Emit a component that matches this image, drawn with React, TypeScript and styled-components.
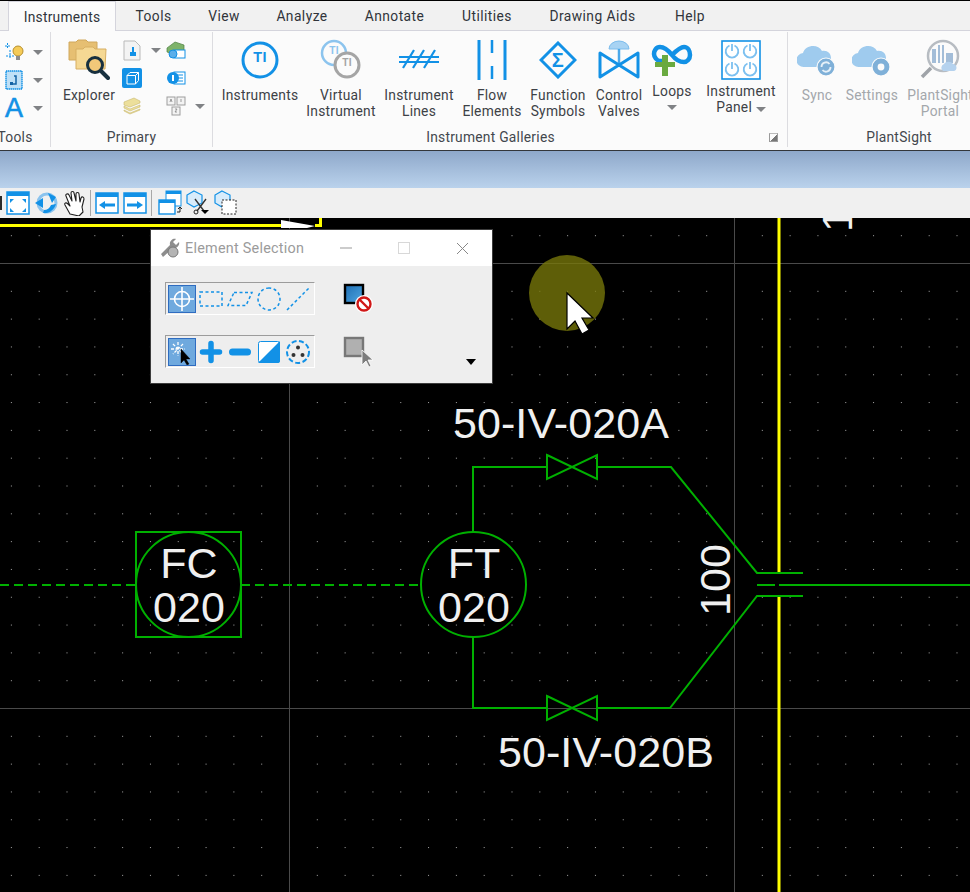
import { ReactNode } from "react";
import styled, { createGlobalStyle } from "styled-components";

const BLUE = "#1291e6";
const GREEN = "#00b000";
const UI_FONT = 'Roboto, "Noto Sans", sans-serif';

const GlobalStyle = createGlobalStyle`
  html, body {
    margin: 0;
    padding: 0;
    background: #000;
  }
  * {
    box-sizing: border-box;
  }
`;

const Page = styled.div`
  width: 970px;
  height: 892px;
  overflow: hidden;
  display: flex;
  flex-direction: column;
  font-family: ${UI_FONT};
  font-size: 13.8px;
  letter-spacing: 0.25px;
  color: #333;
  background: #000;
  padding-top: 1px;
`;

const TabBar = styled.div`
  height: 30px;
  flex: none;
  display: flex;
  padding-left: 8px;
  background: #f1f1f1;
  border-bottom: 1px solid #d4d4dc;
`;

const Tab = styled.div<{ $width: number; $active?: boolean }>`
  width: ${(p) => p.$width}px;
  height: ${(p) => (p.$active ? "30px" : "29px")};
  margin-right: ${(p) => (p.$active ? "2px" : "0")};
  line-height: 30px;
  text-align: center;
  white-space: nowrap;
  letter-spacing: ${(p) => (p.$active ? "0.25px" : "0.45px")};
  color: #30343a;
  background: ${(p) => (p.$active ? "#fbfbfb" : "transparent")};
  border: ${(p) => (p.$active ? "1px solid #d4d4dc" : "none")};
  border-bottom: none;
  position: relative;
  z-index: 1;
`;

const Ribbon = styled.div`
  height: 120px;
  flex: none;
  display: flex;
  background: #fbfbfb;
  border-bottom: 1px solid #33363a;
`;

const Group = styled.div<{ $width: number; $offset?: number }>`
  width: ${(p) => p.$width}px;
  margin-left: ${(p) => p.$offset ?? 0}px;
  flex: none;
  display: flex;
  flex-direction: column;
  position: relative;
  border-right: 1px solid #dcdce0;
  margin-top: 1px;
  margin-bottom: 3px;
`;

const GroupBody = styled.div<{ $pad?: number }>`
  height: 96px;
  display: flex;
  padding-left: ${(p) => p.$pad ?? 0}px;
`;

const GroupLabel = styled.div<{ $padRight?: number }>`
  text-align: center;
  line-height: 20px;
  padding-right: ${(p) => p.$padRight ?? 0}px;
  color: #43474d;
  white-space: nowrap;
`;

const Launcher = styled.div`
  position: absolute;
  right: 9px;
  bottom: 5px;
  width: 9px;
  height: 9px;
  border: 1px solid #9a9a9a;
  border-top-color: #bbb;
  background: linear-gradient(135deg, transparent 50%, #777 50%);
`;

const BigButton = styled.div<{ $width: number; $muted?: boolean }>`
  width: ${(p) => p.$width}px;
  flex: none;
  display: flex;
  flex-direction: column;
  align-items: center;
  padding-top: 7px;
  text-align: center;
  line-height: 16px;
  white-space: nowrap;
  color: ${(p) => (p.$muted ? "#a3a7ab" : "#3d4146")};
`;

const BigIcon = styled.div<{ $gap?: number }>`
  height: 42px;
  margin-bottom: ${(p) => p.$gap ?? 6}px;
  display: flex;
  align-items: center;
  justify-content: center;
`;

const Caret = styled.span<{ $color?: string }>`
  display: inline-block;
  width: 0;
  height: 0;
  border-left: 5px solid transparent;
  border-right: 5px solid transparent;
  border-top: 5px solid ${(p) => p.$color ?? "#808285"};
`;

const LoopsCaret = styled(Caret)`
  margin-top: 6px;
`;

const SmallColumn = styled.div<{ $width: number; $top?: number }>`
  width: ${(p) => p.$width}px;
  flex: none;
  display: flex;
  flex-direction: column;
  padding-top: ${(p) => p.$top ?? 8}px;
  gap: 8px;
`;

const SmallTool = styled.div`
  height: 20px;
  display: flex;
  align-items: center;
  gap: 9px;
`;

const LetterIcon = styled.span`
  width: 20px;
  font-family: "Liberation Sans", sans-serif;
  font-size: 27px;
  line-height: 20px;
  letter-spacing: 0;
  text-align: center;
  color: ${BLUE};
  -webkit-text-stroke: 0.6px ${BLUE};
`;

const Backdrop = styled.div`
  height: 37px;
  flex: none;
  background: linear-gradient(#8ea8ca, #bad2ec);
`;

const Toolbar = styled.div`
  height: 30px;
  flex: none;
  display: flex;
  align-items: center;
  gap: 4px;
  background: #f0f0f0;
`;

const ClippedTool = styled.div`
  width: 2px;
  height: 14px;
  background: #2b2b2b;
`;

const ToolSeparator = styled.div<{ $after?: number }>`
  width: 1px;
  height: 26px;
  margin-right: ${(p) => p.$after ?? 0}px;
  background: #a8a8a8;
`;

const Canvas = styled.div`
  flex: 1;
  position: relative;
  background: #000;
  overflow: hidden;
`;

const Drawing = styled.svg`
  display: block;
`;

const CadText = styled.text`
  font-family: "Liberation Sans", Arial, sans-serif;
  font-size: 43px;
  letter-spacing: 0.1px;
  fill: #f0f0f0;
`;

const SelectionWindow = styled.div`
  position: absolute;
  left: 150px;
  top: 11px;
  width: 343px;
  height: 155px;
  border: 1px solid #3c3c3c;
  background: #eeeeee;
  display: flex;
  flex-direction: column;
`;

const TitleBar = styled.div`
  height: 36px;
  flex: none;
  display: flex;
  align-items: center;
  padding-left: 8px;
  background: #fff;
  color: #9b9b9b;
  font-size: 14.4px;
`;

const TitleText = styled.div`
  margin-left: 4px;
  flex: 1;
`;

const WindowControl = styled.div`
  width: 58.5px;
  height: 100%;
  display: flex;
  align-items: center;
  justify-content: center;
`;

const WindowBody = styled.div`
  flex: 1;
  display: flex;
  flex-direction: column;
  gap: 20px;
  padding: 16px 0 0 14px;
  position: relative;
`;

const OptionRow = styled.div`
  display: flex;
  align-items: center;
  gap: 28px;
`;

const OptionStrip = styled.div`
  width: 150px;
  height: 33px;
  display: flex;
  align-items: center;
  padding-left: 2px;
  border: 1px solid #fff;
  border-top-color: #9c9c9c;
  border-left-color: #9c9c9c;
`;

const OptionButton = styled.div<{ $active?: boolean }>`
  width: 28px;
  height: 28px;
  flex: none;
  margin-right: 1px;
  display: flex;
  align-items: center;
  justify-content: center;
  background: ${(p) => (p.$active ? "#6fa9de" : "transparent")};
  border: ${(p) => (p.$active ? "1px solid #2f6cc0" : "none")};
`;

const MoreCaret = styled.span`
  position: absolute;
  right: 16px;
  bottom: 18px;
  border-left: 5px solid transparent;
  border-right: 5px solid transparent;
  border-top: 6px solid #000;
`;

const TiBadge = ({ x, y, r, color, stroke }: { x: number; y: number; r: number; color: string; stroke: number }) => (
  <g>
    <circle cx={x} cy={y} r={r} fill="#fbfbfb" stroke={color} strokeWidth={stroke} />
    <text x={x} y={y + r * 0.12} textAnchor="middle" fontFamily="Liberation Sans, sans-serif" fontWeight="700" fontSize={r * 0.85} fill={color}>
      TI
    </text>
  </g>
);

const Icon = ({ w, h, children }: { w: number; h: number; children: ReactNode }) => (
  <svg width={w} height={h} viewBox={`0 0 ${w} ${h}`}>
    {children}
  </svg>
);

const ExplorerIcon = () => (
  <Icon w={42} h={42}>
    <path d="M1 3h7l2-2h8l2 2h9v18H1z" fill="#e6bf72" stroke="#d0a85c" />
    <path d="M8 10h7l2-2h8l2 2h11l-1 20H8z" fill="#f5d893" stroke="#d7ae62" />
    <circle cx="27" cy="26" r="7.5" fill="#f2c879" stroke="#17303f" strokeWidth="3" />
    <path d="M33 32l7 7" stroke="#17303f" strokeWidth="4" strokeLinecap="round" />
  </Icon>
);

const LinesIcon = () => (
  <Icon w={42} h={42}>
    <path d="M1 23h40M1 18h40" stroke={BLUE} strokeWidth="2" />
    <path d="M5 29l11-18M15 29l11-18M26 29l11-18" stroke={BLUE} strokeWidth="2.2" />
  </Icon>
);

const FlowIcon = () => (
  <Icon w={30} h={42}>
    <path d="M2 1v40M28 1v40" stroke={BLUE} strokeWidth="3" />
    <path d="M15 1v13M15 27v13" stroke={BLUE} strokeWidth="2.5" />
  </Icon>
);

const SymbolIcon = () => (
  <Icon w={38} h={38}>
    <path d="M19 2l17 17-17 17L2 19z" fill="none" stroke={BLUE} strokeWidth="3" />
    <text x="19" y="26" textAnchor="middle" fontFamily="Liberation Sans, sans-serif" fontWeight="700" fontSize="20" fill={BLUE}>
      Σ
    </text>
  </Icon>
);

const ValveIcon = () => (
  <Icon w={42} h={42}>
    <path d="M11 10a10 8 0 0 1 20 0z" fill="#a8d3f3" stroke="#7cbcec" />
    <path d="M21 10v16" stroke="#4aa8ea" strokeWidth="2.5" />
    <path d="M2 14l38 24V14L2 38z" fill="none" stroke={BLUE} strokeWidth="3" strokeLinejoin="round" />
  </Icon>
);

const LoopIcon = () => (
  <Icon w={42} h={34}>
    <path d="M21 12C17 7 13 4 9 4 5 4 3 8 3 11s3 7 6 7h6M21 12c4-4 8-8 12-8s6 4 6 8-3 7-6 7c-5 0-9-3-12-7" fill="none" stroke={BLUE} strokeWidth="4.5" />
    <path d="M4 19h7v-7h6v7h7v5h-7v9h-6v-9H4z" fill="#6aaa40" />
  </Icon>
);

const PanelIcon = () => (
  <Icon w={40} h={40}>
    <rect x="1" y="1" width="38" height="38" fill="#fff" stroke={BLUE} strokeWidth="1.6" />
    {[
      [11, 11],
      [29, 11],
      [11, 29],
      [29, 29],
    ].map(([x, y]) => (
      <g key={`${x}-${y}`} fill="none" stroke="#7cc0f0" strokeWidth="1.8">
        <path d={`M${x - 2.5} ${y - 5.5}a6.3 6.3 0 1 0 5 0`} />
        <path d={`M${x} ${y - 7}v7`} />
      </g>
    ))}
  </Icon>
);

const CloudIcon = ({ gear }: { gear?: boolean }) => (
  <Icon w={40} h={34}>
    <path d="M7 24a7 7 0 0 1-1-14C8 2 21 0 25 8c5-1 9 2 9 7v9z" fill="#9fcbee" />
    <circle cx={29} cy={24} r={9} fill="#7fb0d8" stroke="#fbfbfb" strokeWidth="1.2" />
    {gear ? (
      <circle cx={29} cy={24} r={3.4} fill="#fbfbfb" />
    ) : (
      <path d="M24.5 24a4.5 4.5 0 0 1 8-3M33.5 24a4.5 4.5 0 0 1-8 3" fill="none" stroke="#e6f0f8" strokeWidth="1.8" />
    )}
  </Icon>
);

const PortalIcon = () => (
  <Icon w={42} h={42}>
    <circle cx="24" cy="17" r="15" fill="#fbfbfb" stroke="#b7bcc2" strokeWidth="2.5" />
    <path d="M12 29l-9 9" stroke="#9fa3a8" strokeWidth="3.5" />
    <path d="M13 24V10h4v14zM19 24V6h2v18zM23 24V6h2v18zM27 24V14h7v10z" fill="#a3bdd8" />
    <path d="M24 32a4 4 0 0 1 1-7c2-3 7-3 9 0 4 0 5 6 1 7z" fill="#b5d2ee" />
  </Icon>
);

const SmallDoc = () => (
  <Icon w={20} h={21}>
    <path d="M2 1h11l5 5v14H2z" fill="#f3f3f3" stroke="#b9b9b9" />
    <path d="M8 12h2V7h2v5h2v4H8z" fill={BLUE} />
  </Icon>
);

const SmallCube = () => (
  <Icon w={20} h={20}>
    <rect width="20" height="20" rx="2" fill={BLUE} />
    <path d="M5 7.5h8.5V16H5zM5 7.5L8 4.5h8.5L13.5 7.5M16.5 4.5v8l-3 3.5" fill="none" stroke="#fff" strokeWidth="1" />
  </Icon>
);

const SmallStack = () => (
  <Icon w={20} h={18}>
    <path d="M2 5l10-4 6 3v2L8 10 2 8zM2 9l6 3 10-4v2L8 14l-6-3zM2 13l6 3 10-4v1L8 17l-6-3z" fill="#ecdf9b" stroke="#c9b96e" strokeWidth="0.6" />
  </Icon>
);

const SmallBox = () => (
  <Icon w={20} h={20}>
    <path d="M1 8l8-6 9 3v5l-8 5-9-3z" fill="#7eb36a" stroke="#4f8042" strokeWidth="0.7" />
    <rect x="8" y="10" width="11" height="8" fill="#fff" stroke={BLUE} />
    <circle cx="7" cy="14" r="4" fill="#5aaeea" stroke={BLUE} />
  </Icon>
);

const SmallInfo = () => (
  <Icon w={20} h={16}>
    <rect x="8" y="2" width="11" height="12" fill="#fff" stroke={BLUE} />
    <path d="M11 5h6M11 8h6M11 11h6" stroke={BLUE} />
    <circle cx="7" cy="8" r="6" fill={BLUE} />
    <rect x="6" y="5" width="2" height="6" fill="#fff" />
  </Icon>
);

const SmallKeys = () => (
  <Icon w={20} h={20}>
    <g fill="#f3f3f3" stroke="#9d9d9d">
      <rect x="1" y="1" width="8" height="8" />
      <rect x="11" y="1" width="8" height="8" />
      <rect x="6" y="11" width="8" height="8" />
    </g>
    <path d="M4 6l1-3 1 3M15 3v3M9 13h2l-2 3h2" fill="none" stroke="#777" strokeWidth="0.7" />
  </Icon>
);

const SmallBulb = () => (
  <Icon w={20} h={20}>
    <path d="M1 4h5M3.5 1v6M2 14h8M6 8v9" stroke={BLUE} strokeWidth="1" strokeDasharray="2 1" />
    <circle cx="14" cy="9" r="5" fill="#f5cb58" stroke="#b68f2e" />
    <rect x="12" y="14" width="4" height="4" fill="#8d8d8d" />
  </Icon>
);

const SmallNote = () => (
  <Icon w={20} h={20}>
    <rect x="2" y="1" width="16" height="18" fill="#bfe0f6" stroke={BLUE} strokeWidth="1.4" strokeDasharray="1.5 0.5" />
    <path d="M7 14h5V6h-2" fill="none" stroke="#1463a5" strokeWidth="1.5" />
    <rect x="6" y="12" width="3" height="3" fill="#1463a5" />
  </Icon>
);

const BlueWindowIcon = ({ arrow }: { arrow?: "left" | "right" }) => (
  <Icon w={24} h={22}>
    <rect x="1" y="1" width="22" height="20" fill="#fff" stroke={BLUE} strokeWidth="1.5" />
    <rect x="1" y="1" width="22" height="4" fill={BLUE} />
    {arrow === "left" && <path d="M4 13l6-4v2.5h10v3H10V17z" fill={BLUE} />}
    {arrow === "right" && <path d="M20 13l-6-4v2.5H4v3h10V17z" fill={BLUE} />}
  </Icon>
);

const FitViewIcon = () => (
  <Icon w={24} h={24}>
    <rect x="1" y="1" width="22" height="22" fill="#fff" stroke={BLUE} strokeWidth="1.5" />
    <rect x="1" y="1" width="22" height="4" fill={BLUE} />
    <path d="M4 8l4 0-4 4zM20 8l-4 0 4 4zM4 21l4 0-4-4zM20 21l-4 0 4-4z" fill={BLUE} />
  </Icon>
);

const RotateIcon = () => (
  <Icon w={24} h={24}>
    <circle cx="13" cy="12" r="9" fill="none" stroke="#8ac3ee" strokeWidth="3" />
    <path d="M1 12l8-5v10z" fill={BLUE} />
    <path d="M14 2l8 4-4 6z" fill={BLUE} />
    <path d="M9 22c6 1 11-3 13-9l-5 1c-1 3-4 5-7 5z" fill={BLUE} />
  </Icon>
);

const HandIcon = () => (
  <Icon w={24} h={26}>
    <path
      d="M8 24L3 15c-1-2 1-3 3-1l2 2L4 6c-1-2 2-3 3-1l3 6-1-8c0-2 3-2 3 0l2 8 0-7c0-2 3-2 3 0l1 8 1-4c1-2 3-1 3 1l-2 8 1 5-4 4z"
      fill="#fff"
      stroke="#1f1f1f"
      strokeWidth="1.1"
      strokeLinejoin="round"
    />
  </Icon>
);

const CopyWindowIcon = () => (
  <Icon w={24} h={26}>
    <rect x="8" y="1" width="15" height="15" fill="#fff" stroke={BLUE} />
    <rect x="8" y="1" width="15" height="3" fill={BLUE} />
    <rect x="1" y="10" width="16" height="14" fill="#fff" stroke={BLUE} strokeWidth="1.4" />
    <rect x="1" y="10" width="16" height="3" fill={BLUE} />
    <path d="M19 22h3v-4M20 19l2-2 2 2" fill="none" stroke="#222" strokeWidth="1" />
  </Icon>
);

const CubeCutIcon = () => (
  <Icon w={24} h={26}>
    <path d="M8 1l8 4v8l-8 4-7-4V5z" fill="#d8ecfb" stroke={BLUE} strokeWidth="1.2" />
    <path d="M9 9l9 12M20 9l-9 12" stroke="#333" strokeWidth="1.4" />
    <circle cx="10" cy="22" r="2" fill="none" stroke="#222" />
    <path d="M15 20h8l-4 4z" fill="#000" />
  </Icon>
);

const CubeSelectIcon = () => (
  <Icon w={24} h={26}>
    <path d="M8 1l8 4v8l-8 4-7-4V5z" fill="#d8ecfb" stroke={BLUE} strokeWidth="1.2" />
    <rect x="8" y="10" width="14" height="14" fill="#fff" stroke="#222" strokeDasharray="2 1.5" />
  </Icon>
);

const WrenchIcon = () => (
  <Icon w={22} h={22}>
    <path d="M4 20L2 17l9-9c-1-4 3-7 6-6l-3 3 3 3 3-3c1 3-2 7-6 6z" fill="#8d8d8d" />
    <circle cx="14" cy="15" r="5" fill="#b4b4b4" stroke="#777" />
  </Icon>
);

const Crosshair = () => (
  <Icon w={26} h={26}>
    <circle cx="13" cy="13" r="7.5" fill="none" stroke="#fff" strokeWidth="1.6" />
    <path d="M13 1v24M1 13h24" stroke="#fff" strokeWidth="1.6" />
  </Icon>
);

const DashedShape = ({ d }: { d: string }) => (
  <Icon w={26} h={26}>
    <path d={d} fill="none" stroke={BLUE} strokeWidth="1.5" strokeDasharray="3 2.5" />
  </Icon>
);

const PickIcon = () => (
  <Icon w={26} h={26}>
    <path d="M9 3v14M2 10h14M4 5l10 10M14 5L4 15" stroke="#fff" strokeWidth="1.3" strokeDasharray="3 1.5" />
    <path d="M12 10v14l3-3 3 5 2-1-3-5h4z" fill="#000" stroke="#000" strokeWidth="0.4" />
  </Icon>
);

const PlusIcon = () => (
  <Icon w={26} h={26}>
    <path d="M13 4.5v17M4.5 13h17" stroke={BLUE} strokeWidth="5.5" strokeLinecap="round" />
  </Icon>
);

const MinusIcon = () => (
  <Icon w={26} h={26}>
    <path d="M5.5 13h15" stroke={BLUE} strokeWidth="7" strokeLinecap="round" />
  </Icon>
);

const InvertIcon = () => (
  <Icon w={26} h={26}>
    <rect x="2.5" y="2.5" width="21" height="21" rx="2" fill="#fff" stroke={BLUE} />
    <path d="M24 2v20a2 2 0 0 1-2 2H2z" fill={BLUE} />
  </Icon>
);

const DotsIcon = () => (
  <Icon w={26} h={26}>
    <circle cx="13" cy="13" r="11" fill="none" stroke={BLUE} strokeWidth="2" strokeDasharray="5 2.5" />
    <circle cx="13" cy="8.5" r="2" fill="#333" />
    <circle cx="8.5" cy="16" r="2" fill="#333" />
    <circle cx="17.5" cy="16" r="2" fill="#333" />
  </Icon>
);

const NoFillIcon = () => (
  <Icon w={32} h={32}>
    <defs>
      <linearGradient id="noFill" x1="0" y1="0" x2="1" y2="1">
        <stop offset="0" stopColor="#1f6fb5" />
        <stop offset="1" stopColor="#4fa6e0" />
      </linearGradient>
    </defs>
    <rect x="2" y="2" width="18" height="18" fill="url(#noFill)" stroke="#000" strokeWidth="2.4" />
    <circle cx="21" cy="21" r="9" fill="#fff" />
    <circle cx="21" cy="21" r="6.5" fill="#fff" stroke="#d01818" strokeWidth="2.4" />
    <path d="M16.5 16.5l9 9" stroke="#d01818" strokeWidth="2.4" />
  </Icon>
);

const GreySelectIcon = () => (
  <Icon w={32} h={32}>
    <rect x="2" y="2" width="18" height="18" fill="#b0b0b0" stroke="#777" strokeWidth="2.4" />
    <path d="M19 14v15l4-4 3 6 2-1-3-6h5z" fill="#7c7c7c" stroke="#fff" strokeWidth="0.8" />
  </Icon>
);

const PITCH = 27.8125;

function CadDrawing() {
  return (
    <Drawing width={970} height={674} viewBox="0 218 970 674">
      <defs>
        <pattern id="gridDots" x={289} y={263} width={PITCH} height={PITCH} patternUnits="userSpaceOnUse">
          <rect x={0} y={0} width={1} height={1} fill="#a8a8a8" />
        </pattern>
      </defs>
      <rect x={0} y={218} width={970} height={674} fill="#000" />
      <rect x={0} y={218} width={970} height={674} fill="url(#gridDots)" />
      <path d="M289.5 218v674M734.5 218v674M0 263.5h970M0 708.5h970" stroke="#4a4a4a" strokeWidth="1" />

      {/* yellow sheet border */}
      <path d="M779 218v355M779 597v295" stroke="#ffff00" strokeWidth="3" />
      <path d="M0 225.5h281M315 225.5h5.5V218" fill="none" stroke="#ffff00" strokeWidth="3" />
      <path d="M281 220l34 6-8 2h-26z" fill="#fff" />
      <CadText transform="translate(852 232) rotate(-90)">1</CadText>

      <g fill="none" stroke={GREEN} strokeWidth="2">
        <rect x={136} y={532} width={105} height={105} />
        <circle cx={188.5} cy={584.5} r={52.5} />
        <circle cx={473.5} cy={584.5} r={52.5} />
        <path d="M0 585h136M241 585h180" strokeDasharray="9 5" />
        <path d="M473 532v-65h74M597 467h74l86 106h46" />
        <path d="M473 637v71h74M597 708h73l87-112h46" />
        <path d="M547 455l50 24v-24l-50 24z" />
        <path d="M547 696l50 24v-24l-50 24z" />
        <path d="M757 585h18M779 585h191" />
      </g>

      <CadText x={561} y={438} textAnchor="middle">50-IV-020A</CadText>
      <CadText x={606} y={767} textAnchor="middle">50-IV-020B</CadText>
      <CadText x={189} y={578} textAnchor="middle">FC</CadText>
      <CadText x={189} y={622} textAnchor="middle">020</CadText>
      <CadText x={474} y={578} textAnchor="middle">FT</CadText>
      <CadText x={474} y={622} textAnchor="middle">020</CadText>
      <CadText transform="translate(730 616) rotate(-90)">100</CadText>

      {/* pointer highlight, the grid shows through it */}
      <circle cx={567} cy={293} r={38} fill="#78780a" opacity={0.78} />
      <path d="M567 293v36l8-8 7 13 7-4-7-12h11z" fill="#fff" stroke="#000" strokeWidth="1.2" />
    </Drawing>
  );
}

function App() {
  return (
    <Page>
      <GlobalStyle />
      <TabBar>
        <Tab $width={108} $active>
          Instruments
        </Tab>
        <Tab $width={71}>Tools</Tab>
        <Tab $width={70}>View</Tab>
        <Tab $width={86}>Analyze</Tab>
        <Tab $width={99}>Annotate</Tab>
        <Tab $width={86}>Utilities</Tab>
        <Tab $width={125}>Drawing Aids</Tab>
        <Tab $width={70}>Help</Tab>
      </TabBar>

      <Ribbon>
        <Group $width={71} $offset={-20}>
          <GroupBody $pad={24}>
            <SmallColumn $width={46} $top={10}>
              <SmallTool>
                <SmallBulb />
                <Caret />
              </SmallTool>
              <SmallTool>
                <SmallNote />
                <Caret />
              </SmallTool>
              <SmallTool>
                <LetterIcon>A</LetterIcon>
                <Caret />
              </SmallTool>
            </SmallColumn>
          </GroupBody>
          <GroupLabel>Tools</GroupLabel>
        </Group>

        <Group $width={162}>
          <GroupBody $pad={5}>
            <BigButton $width={66}>
              <BigIcon>
                <ExplorerIcon />
              </BigIcon>
              Explorer
            </BigButton>
            <SmallColumn $width={44}>
              <SmallTool>
                <SmallDoc />
                <Caret />
              </SmallTool>
              <SmallTool>
                <SmallCube />
              </SmallTool>
              <SmallTool>
                <SmallStack />
              </SmallTool>
            </SmallColumn>
            <SmallColumn $width={44}>
              <SmallTool>
                <SmallBox />
              </SmallTool>
              <SmallTool>
                <SmallInfo />
              </SmallTool>
              <SmallTool>
                <SmallKeys />
                <Caret />
              </SmallTool>
            </SmallColumn>
          </GroupBody>
          <GroupLabel>Primary</GroupLabel>
        </Group>

        <Group $width={575}>
          <GroupBody $pad={7}>
            <BigButton $width={80}>
              <BigIcon>
                <Icon w={38} h={38}>
                  <TiBadge x={19} y={19} r={17} color={BLUE} stroke={3} />
                </Icon>
              </BigIcon>
              Instruments
            </BigButton>
            <BigButton $width={82}>
              <BigIcon>
                <Icon w={42} h={42}>
                  <TiBadge x={14} y={14} r={12} color="#8cc4ee" stroke={2.5} />
                  <TiBadge x={27} y={26} r={12} color="#a5a5a5" stroke={3} />
                </Icon>
              </BigIcon>
              Virtual
              <br />
              Instrument
            </BigButton>
            <BigButton $width={74}>
              <BigIcon>
                <LinesIcon />
              </BigIcon>
              Instrument
              <br />
              Lines
            </BigButton>
            <BigButton $width={72}>
              <BigIcon>
                <FlowIcon />
              </BigIcon>
              Flow
              <br />
              Elements
            </BigButton>
            <BigButton $width={60}>
              <BigIcon>
                <SymbolIcon />
              </BigIcon>
              Function
              <br />
              Symbols
            </BigButton>
            <BigButton $width={62}>
              <BigIcon>
                <ValveIcon />
              </BigIcon>
              Control
              <br />
              Valves
            </BigButton>
            <BigButton $width={44}>
              <BigIcon $gap={2}>
                <LoopIcon />
              </BigIcon>
              Loops
              <LoopsCaret />
            </BigButton>
            <BigButton $width={94}>
              <BigIcon $gap={2}>
                <PanelIcon />
              </BigIcon>
              Instrument
              <span>
                Panel <Caret />
              </span>
            </BigButton>
          </GroupBody>
          <GroupLabel $padRight={19}>Instrument Galleries</GroupLabel>
          <Launcher />
        </Group>

        <Group $width={223}>
          <GroupBody>
            <BigButton $width={58} $muted>
              <BigIcon>
                <CloudIcon />
              </BigIcon>
              Sync
            </BigButton>
            <BigButton $width={52} $muted>
              <BigIcon>
                <CloudIcon gear />
              </BigIcon>
              Settings
            </BigButton>
            <BigButton $width={84} $muted>
              <BigIcon>
                <PortalIcon />
              </BigIcon>
              PlantSight
              <br />
              Portal
            </BigButton>
          </GroupBody>
          <GroupLabel>PlantSight</GroupLabel>
        </Group>
      </Ribbon>

      <Backdrop />

      <Toolbar>
        <ClippedTool />
        <FitViewIcon />
        <RotateIcon />
        <HandIcon />
        <ToolSeparator />
        <BlueWindowIcon arrow="left" />
        <BlueWindowIcon arrow="right" />
        <ToolSeparator $after={2} />
        <CopyWindowIcon />
        <CubeCutIcon />
        <CubeSelectIcon />
      </Toolbar>

      <Canvas>
        <CadDrawing />
        <SelectionWindow>
          <TitleBar>
            <WrenchIcon />
            <TitleText>Element Selection</TitleText>
            <WindowControl>
              <Icon w={12} h={12}>
                <path d="M0 6h12" stroke="#999" />
              </Icon>
            </WindowControl>
            <WindowControl>
              <Icon w={12} h={12}>
                <rect x="0.5" y="0.5" width="11" height="11" fill="none" stroke="#d8d8d8" />
              </Icon>
            </WindowControl>
            <WindowControl>
              <Icon w={13} h={13}>
                <path d="M1 1l11 11M12 1L1 12" stroke="#888" />
              </Icon>
            </WindowControl>
          </TitleBar>
          <WindowBody>
            <OptionRow>
              <OptionStrip>
                <OptionButton $active>
                  <Crosshair />
                </OptionButton>
                <OptionButton>
                  <DashedShape d="M2 6h22v14H2z" />
                </OptionButton>
                <OptionButton>
                  <DashedShape d="M7 6.5h18l-6 13H1z" />
                </OptionButton>
                <OptionButton>
                  <DashedShape d="M13 2a11 11 0 1 0 .01 0z" />
                </OptionButton>
                <OptionButton>
                  <DashedShape d="M2 24L24 2" />
                </OptionButton>
              </OptionStrip>
              <NoFillIcon />
            </OptionRow>
            <OptionRow>
              <OptionStrip>
                <OptionButton $active>
                  <PickIcon />
                </OptionButton>
                <OptionButton>
                  <PlusIcon />
                </OptionButton>
                <OptionButton>
                  <MinusIcon />
                </OptionButton>
                <OptionButton>
                  <InvertIcon />
                </OptionButton>
                <OptionButton>
                  <DotsIcon />
                </OptionButton>
              </OptionStrip>
              <GreySelectIcon />
            </OptionRow>
            <MoreCaret />
          </WindowBody>
        </SelectionWindow>
      </Canvas>
    </Page>
  );
}

export default App;
